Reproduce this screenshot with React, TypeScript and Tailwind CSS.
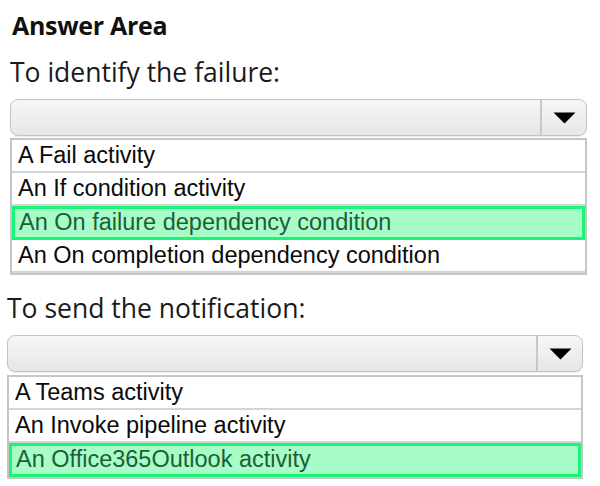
import React from "react";

type Group = {
  label: string;
  options: string[];
  selected: number;
};

const groups: Group[] = [
  {
    label: "To identify the failure:",
    options: [
      "A Fail activity",
      "An If condition activity",
      "An On failure dependency condition",
      "An On completion dependency condition",
    ],
    selected: 2,
  },
  {
    label: "To send the notification:",
    options: ["A Teams activity", "An Invoke pipeline activity", "An Office365Outlook activity"],
    selected: 2,
  },
];

function Caret() {
  return (
    <svg width="23" height="12" viewBox="0 0 23 12">
      <path d="M0.5 0.5 H22.5 L11.5 11.5 Z" fill="#000" />
    </svg>
  );
}

function Dropdown({ group, inset, listGap }: { group: Group; inset: string; listGap: string }) {
  return (
    <div className={inset}>
      <div className="flex h-[37px] rounded-[8px] border border-[#c4c4c4] bg-gradient-to-b from-[#f7f7f7] to-[#e6e6e6] shadow-[0_1px_1px_rgba(0,0,0,0.08)]">
        <div className="flex-1" />
        <div className="flex w-[46px] items-center justify-center border-l-2 border-[#c8c8c8]">
          <Caret />
        </div>
      </div>
      <div className={`${listGap} border-2 border-[#c6c6c6] bg-white`}>
        {group.options.map((opt, i) =>
          i === group.selected ? (
            <div
              key={opt}
              className="flex h-[34px] items-center border-[3px] border-[#18f577] bg-[#a8fcc8] pl-[4px] text-[23.5px] text-[#1d5e36]"
            >
              {opt}
            </div>
          ) : (
            <div
              key={opt}
              className="flex h-[33px] items-center border-b-2 border-[#d4d4d4] pl-[6px] text-[23.5px] text-[#0a0a0a]"
            >
              {opt}
            </div>
          )
        )}
      </div>
    </div>
  );
}

export default function App() {
  const heading = { fontFamily: "'Open Sans', sans-serif" };
  return (
    <div className="h-[486px] w-[600px] overflow-hidden bg-white" style={{ fontFamily: "'Liberation Sans', Arial, sans-serif" }}>
      <div className="pl-[12px] pt-[10px] text-[25px] leading-[31px] font-bold tracking-[-0.3px] text-[#111]" style={heading}>
        Answer Area
      </div>
      <div className="mt-[14px] pl-[10px] text-[26.5px] leading-[34px] text-[#1a1a1a]" style={heading}>
        {groups[0].label}
      </div>
      <Dropdown group={groups[0]} inset="ml-[10px] mr-[13px] mt-[10px]" listGap="mt-[2px]" />
      <div className="mt-[16px] pl-[7px] text-[26.5px] leading-[34px] text-[#1a1a1a]" style={heading}>
        {groups[1].label}
      </div>
      <Dropdown group={groups[1]} inset="ml-[7px] mr-[17px] mt-[10px]" listGap="mt-[3px]" />
    </div>
  );
}
